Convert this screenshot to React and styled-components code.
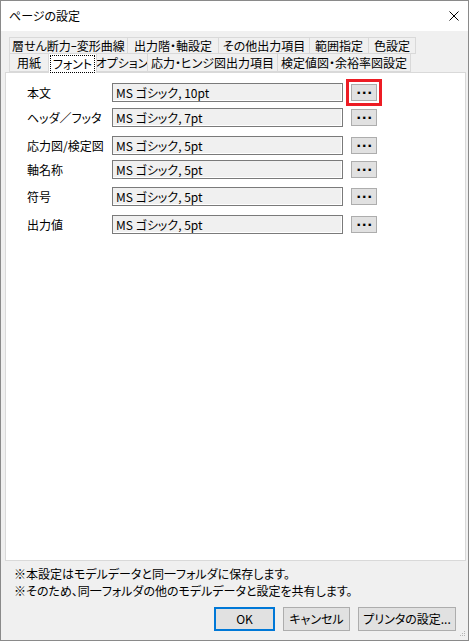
import React from "react";
import styled, { createGlobalStyle } from "styled-components";

const Global = createGlobalStyle`
  html, body { margin: 0; padding: 0; background: #ffffff; }
  body { font-family: "Noto Sans CJK JP", "Noto Sans", sans-serif; font-size: 12px; color: #000; }
  * { box-sizing: border-box; }
`;

const Window = styled.div`
  position: relative;
  width: 469px;
  height: 641px;
  border: 1px solid #8a8a8a;
  background: #f0f0f0;
  display: flex;
  flex-direction: column;
  font-family: "Noto Sans CJK JP", "Noto Sans", sans-serif;
  font-feature-settings: "palt";
  font-size: 12px;
`;

const TitleBar = styled.div`
  height: 30px;
  background: #ffffff;
  display: flex;
  align-items: center;
  justify-content: space-between;
  padding: 0 9px 0 8px;
  flex: none;
`;

const Title = styled.span`
  font-size: 12px;
  line-height: 16px;
  color: #000;
`;

const TabArea = styled.div`
  margin: 6px 0 0 8px;
  display: flex;
  flex-direction: column;
  flex: none;
  position: relative;
  z-index: 1;
`;

const TabRow = styled.div`
  display: flex;
  align-items: flex-end;
  height: ${(p) => p.$h}px;
`;

const Tab = styled.div`
  width: ${(p) => p.$w}px;
  height: ${(p) => (p.$active ? 20 : p.$h)}px;
  margin-right: -1px;
  margin-bottom: ${(p) => (p.$active ? -1 : 0)}px;
  border: 1px solid #d9d9d9;
  border-bottom: ${(p) => (p.$active ? "none" : "1px solid #d9d9d9")};
  background: ${(p) => (p.$active ? "#ffffff" : "#f0f0f0")};
  display: flex;
  align-items: center;
  justify-content: center;
  white-space: nowrap;
  font-size: 12px;
  line-height: 14px;
  position: relative;
  z-index: ${(p) => (p.$active ? 2 : 0)};
`;

const Focus = styled.span`
  border: 1px dotted #000;
  padding: 1px 2px;
  line-height: 14px;
`;

const Panel = styled.div`
  flex: 1;
  margin: 0 2px 0 4px;
  background: #ffffff;
  border: 1px solid #d9d9d9;
  padding: 10px 0 0 21px;
  display: flex;
  flex-direction: column;
`;

const FontRow = styled.div`
  display: flex;
  align-items: center;
  height: 19px;
  margin-top: ${(p) => p.$gap}px;
`;

const Label = styled.div`
  width: 85px;
  font-size: 12px;
  line-height: 16px;
  white-space: nowrap;
`;

const FontBox = styled.div`
  width: 231px;
  height: 19px;
  border: 1px solid #7a7a7a;
  box-shadow: inset -1px -1px 0 #ffffff;
  background: #f0f0f0;
  padding: 0 3px;
  display: flex;
  align-items: center;
  font-size: 12px;
  line-height: 16px;
  white-space: nowrap;
`;

const DotButton = styled.button`
  margin-left: 8px;
  width: 26px;
  height: 17px;
  padding: 0 0 6px 1px;
  border: 1px solid #adadad;
  background: #e1e1e1;
  font-family: "DejaVu Sans", sans-serif;
  font-weight: bold;
  font-size: 13px;
  line-height: 10px;
  letter-spacing: 0.5px;
  color: #000;
  display: flex;
  align-items: center;
  justify-content: center;
  outline: ${(p) => (p.$marked ? "3px solid #ed1c24" : "none")};
  outline-offset: 2px;
`;

const Notes = styled.div`
  margin-top: 4px;
  padding-left: 13px;
  font-size: 12px;
  line-height: 17px;
  flex: none;
`;

const ButtonBar = styled.div`
  display: flex;
  justify-content: flex-end;
  gap: 8px;
  margin-top: 8px;
  padding: 0 12px 9px 0;
  flex: none;
`;

const DialogButton = styled.button`
  width: ${(p) => p.$w}px;
  height: 24px;
  background: #e1e1e1;
  border: ${(p) => (p.$default ? "2px solid #0078d7" : "1px solid #adadad")};
  font-family: "Noto Sans CJK JP", "Noto Sans", sans-serif;
  font-feature-settings: "palt";
  font-weight: normal;
  font-size: 12px;
  line-height: 16px;
  color: #000;
  padding: 0;
  white-space: nowrap;
`;

const Grip = styled.svg`
  position: absolute;
  right: 2px;
  bottom: 2px;
`;

const topTabs = [
  { t: "層せん断力ｰ変形曲線", w: 119 },
  { t: "出力階・軸設定", w: 92 },
  { t: "その他出力項目", w: 92 },
  { t: "範囲指定", w: 60 },
  { t: "色設定", w: 48 },
];

const bottomTabs = [
  { t: "用紙", w: 40 },
  { t: "フォント", w: 49, active: true },
  { t: "オプション", w: 52 },
  { t: "応力・ヒンジ図出力項目", w: 131 },
  { t: "検定値図・余裕率図設定", w: 134 },
];

const rows = [
  { l: "本文", v: "MS ゴシック, 10pt", g: 0 },
  { l: "ヘッダ／フッタ", v: "MS ゴシック, 7pt", g: 6 },
  { l: "応力図/検定図", v: "MS ゴシック, 5pt", g: 9 },
  { l: "軸名称", v: "MS ゴシック, 5pt", g: 5 },
  { l: "符号", v: "MS ゴシック, 5pt", g: 8 },
  { l: "出力値", v: "MS ゴシック, 5pt", g: 9 },
];

export default function App() {
  return (
    <>
      <Global />
      <Window>
        <TitleBar>
          <Title>ページの設定</Title>
          <svg width="10" height="10" viewBox="0 0 10 10">
            <path d="M0.5 0.5 L9.5 9.5 M9.5 0.5 L0.5 9.5" stroke="#000" strokeWidth="1" fill="none" />
          </svg>
        </TitleBar>
        <TabArea>
          <TabRow $h={17}>
            {topTabs.map((t) => (
              <Tab key={t.t} $w={t.w} $h={17}>{t.t}</Tab>
            ))}
          </TabRow>
          <TabRow $h={18}>
            {bottomTabs.map((t) => (
              <Tab key={t.t} $w={t.w} $h={19} $active={t.active}>
                {t.active ? <Focus>{t.t}</Focus> : t.t}
              </Tab>
            ))}
          </TabRow>
        </TabArea>
        <Panel>
          {rows.map((r, i) => (
            <FontRow key={r.l} $gap={r.g}>
              <Label>{r.l}</Label>
              <FontBox>{r.v}</FontBox>
              <DotButton $marked={i === 0}>...</DotButton>
            </FontRow>
          ))}
        </Panel>
        <Notes>
          <div>※本設定はモデルデータと同一フォルダに保存します。</div>
          <div>※そのため、同一フォルダの他のモデルデータと設定を共有します。</div>
        </Notes>
        <ButtonBar>
          <DialogButton $w={61} $default>OK</DialogButton>
          <DialogButton $w={67}>キャンセル</DialogButton>
          <DialogButton $w={98}>プリンタの設定...</DialogButton>
        </ButtonBar>
        <Grip width="7" height="7" viewBox="0 0 7 7">
          <rect x="5" y="0" width="1" height="1" fill="#b5b5b5" />
          <rect x="3" y="2" width="1" height="1" fill="#b5b5b5" />
          <rect x="5" y="2" width="1" height="1" fill="#b5b5b5" />
          <rect x="1" y="4" width="1" height="1" fill="#b5b5b5" />
          <rect x="3" y="4" width="1" height="1" fill="#b5b5b5" />
          <rect x="5" y="4" width="1" height="1" fill="#b5b5b5" />
        </Grip>
      </Window>
    </>
  );
}
